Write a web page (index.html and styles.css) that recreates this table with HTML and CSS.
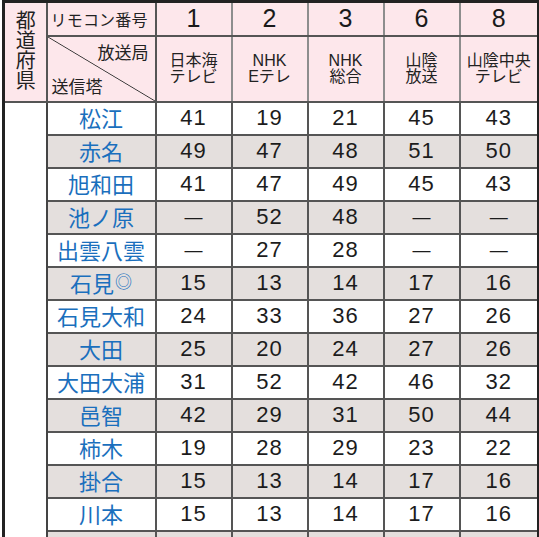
FILE: index.html
```html
<!DOCTYPE html>
<html lang="ja">
<head>
<meta charset="utf-8">
<link rel="stylesheet" href="styles.css">
</head>
<body>
<table class="tbl">
  <colgroup>
    <col class="c-pref"><col class="c-name"><col class="c-d"><col class="c-d"><col class="c-d"><col class="c-d"><col class="c-last">
  </colgroup>
  <thead>
    <tr class="h1">
      <th class="pref" rowspan="2"><span class="vert">都道府県</span></th>
      <th class="remo">リモコン番号</th>
      <th class="num">1</th><th class="num">2</th><th class="num">3</th><th class="num">6</th><th class="num">8</th>
    </tr>
    <tr class="h2">
      <th class="diag"><div class="diagbox"><span class="kyoku">放送局</span><span class="tou">送信塔</span></div></th>
      <th class="st">日本海<br>テレビ</th>
      <th class="st">NHK<br>Eテレ</th>
      <th class="st">NHK<br>総合</th>
      <th class="st">山陰<br>放送</th>
      <th class="st">山陰中央<br>テレビ</th>
    </tr>
  </thead>
  <tbody>
    <tr><td class="blank" rowspan="14"></td><td class="nm">松江</td><td>41</td><td>19</td><td>21</td><td>45</td><td>43</td></tr>
    <tr class="g"><td class="nm">赤名</td><td>49</td><td>47</td><td>48</td><td>51</td><td>50</td></tr>
    <tr><td class="nm">旭和田</td><td>41</td><td>47</td><td>49</td><td>45</td><td>43</td></tr>
    <tr class="g"><td class="nm">池ノ原</td><td class="dash">—</td><td>52</td><td>48</td><td class="dash">—</td><td class="dash">—</td></tr>
    <tr><td class="nm">出雲八雲</td><td class="dash">—</td><td>27</td><td>28</td><td class="dash">—</td><td class="dash">—</td></tr>
    <tr class="g"><td class="nm">石見<span class="mark">◎</span></td><td>15</td><td>13</td><td>14</td><td>17</td><td>16</td></tr>
    <tr><td class="nm">石見大和</td><td>24</td><td>33</td><td>36</td><td>27</td><td>26</td></tr>
    <tr class="g"><td class="nm">大田</td><td>25</td><td>20</td><td>24</td><td>27</td><td>26</td></tr>
    <tr><td class="nm">大田大浦</td><td>31</td><td>52</td><td>42</td><td>46</td><td>32</td></tr>
    <tr class="g"><td class="nm">邑智</td><td>42</td><td>29</td><td>31</td><td>50</td><td>44</td></tr>
    <tr><td class="nm">柿木</td><td>19</td><td>28</td><td>29</td><td>23</td><td>22</td></tr>
    <tr class="g"><td class="nm">掛合</td><td>15</td><td>13</td><td>14</td><td>17</td><td>16</td></tr>
    <tr><td class="nm">川本</td><td>15</td><td>13</td><td>14</td><td>17</td><td>16</td></tr>
    <tr class="g"><td class="nm">&nbsp;</td><td></td><td></td><td></td><td></td><td></td></tr>
  </tbody>
</table>
</body>
</html>
```
FILE: styles.css
```css
html, body {
  margin: 0;
  padding: 0;
  background: #ffffff;
  overflow: hidden;
}
body {
  padding-left: 2px;
  font-family: "Liberation Sans", "Noto Sans CJK JP", sans-serif;
  color: #1e1e1e;
}
.tbl {
  border-collapse: collapse;
  table-layout: fixed;
  width: 535px;
  border-top: 3px solid #222;
  border-left: 3px solid #222;
  border-right: 3px solid #222;
}
.c-pref { width: 43px; }
.c-name { width: 109px; }
.c-d { width: 76px; }
.c-last { width: 79px; }

th, td {
  border: 2px solid #555;
  padding: 0;
  text-align: center;
  vertical-align: middle;
}
thead th {
  background: #fde7eb;
  font-weight: normal;
  border-left-color: #8d8d8d;
  border-right-color: #8d8d8d;
}
thead th.pref, thead th.remo, thead th.diag {
  border-right-color: #555;
}
.h1 { height: 34px; }
.h2 { height: 64px; }
.pref {
  font-family: "Noto Sans CJK JP", sans-serif;
  font-size: 20px;
  color: #222;
}
.vert {
  display: inline-block;
  writing-mode: vertical-rl;
  text-orientation: upright;
  letter-spacing: 0;
  line-height: 24px;
  margin-top: 2px;
}
.remo {
  font-family: "Noto Sans CJK JP", sans-serif;
  font-size: 16px;
  color: #222;
  text-align: left;
  padding-left: 3px;
  letter-spacing: 0.2px;
}
.num {
  font-size: 25px;
  color: #1a1a1a;
}
.diag {
  background: #fde7eb linear-gradient(to top right, transparent calc(50% - 0.8px), #333 50%, transparent calc(50% + 0.8px));
  font-family: "Noto Sans CJK JP", sans-serif;
  font-size: 17px;
  color: #222;
}
.diagbox {
  height: 64px;
  display: flex;
  flex-direction: column;
  justify-content: space-between;
  padding: 3px 6px 3px 4px;
  box-sizing: border-box;
  line-height: 24px;
}
.kyoku { align-self: flex-end; }
.tou { align-self: flex-start; }
.st {
  font-family: "Liberation Sans", "Noto Sans CJK JP", sans-serif;
  font-size: 16px;
  line-height: 16px;
  color: #222;
}
tbody tr { height: 33px; }
tbody td {
  font-size: 22px;
  letter-spacing: 1px;
  color: #1c1c1c;
}
tbody tr.g td { background: #e4dfdd; }
tbody td.blank {
  background: #ffffff;
  border-right-color: #444;
}
tbody td.nm {
  font-family: "Noto Sans CJK JP", sans-serif;
  font-size: 22px;
  letter-spacing: 0;
  color: #1a6fbd;
  line-height: 26px;
  padding-bottom: 3px;
}
.mark {
  font-size: 17px;
  vertical-align: 4px;
  margin-left: 1px;
}
td.dash {
  font-size: 18px;
  letter-spacing: 0;
}
```
